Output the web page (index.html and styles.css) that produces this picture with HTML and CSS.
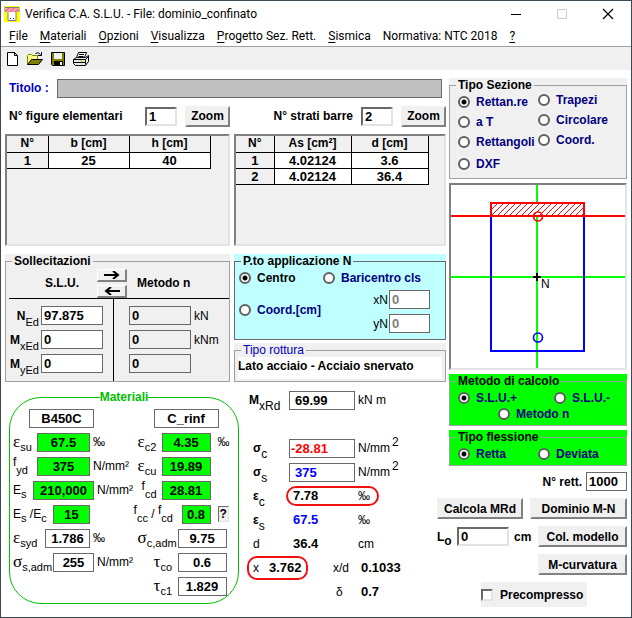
FILE: index.html
```html
<!DOCTYPE html>
<html lang="it">
<head>
    <meta charset="UTF-8">
    <meta name="viewport" content="width=device-width, initial-scale=1.0">
    <title>Verifica C.A. S.L.U. - File: dominio_confinato</title>
    <link rel="stylesheet" href="styles.css">
</head>
<body>
<div class="window">
    <header class="titlebar">
        <svg class="app-icon" width="16" height="16" viewBox="0 0 16 16">
            <rect width="16" height="16" fill="#ffff00"/>
            <path d="M1 1.500h14v4h-3v9h-8v-9H1z" fill="#fff" stroke="#807890"/>
            <path d="M2 2h12v4H2z" fill="#ff9aa8"/>
            <path d="M2 5l3-3M6 6l4-4M11 6l3-3" stroke="#d8607c"/>
            <path d="M6 12.500h1M9 12.500h1" stroke="#404060"/>
        </svg>
        <h1>Verifica C.A. S.L.U. - File: dominio_confinato</h1>
        <div class="win-buttons">
            <button type="button" aria-label="Riduci"><svg width="12" height="12" viewBox="0 0 12 12"><path d="M1 6.500h10" stroke="#000"/></svg></button>
            <button type="button" aria-label="Ingrandisci" disabled><svg width="12" height="12" viewBox="0 0 12 12"><path d="M1.500 1.500h9v9h-9z" fill="none" stroke="#ccc"/></svg></button>
            <button type="button" aria-label="Chiudi"><svg width="12" height="12" viewBox="0 0 12 12"><path d="M1 1l10 10M11 1L1 11" stroke="#000" stroke-width="1.200"/></svg></button>
        </div>
    </header>

    <nav class="menubar">
        <a href="#"><u>F</u>ile</a>
        <a href="#"><u>M</u>ateriali</a>
        <a href="#"><u>O</u>pzioni</a>
        <a href="#"><u>V</u>isualizza</a>
        <a href="#"><u>P</u>rogetto Sez. Rett.</a>
        <a href="#"><u>S</u>ismica</a>
        <a href="#">Normativa: NTC 2018</a>
        <a href="#"><u>?</u></a>
    </nav>

    <div class="toolbar">
        <button type="button" aria-label="Nuovo">
            <svg width="16" height="16" viewBox="0 0 16 16"><path d="M3.500 1.500h7l3 3v10h-10zM10.500 1.500v3h3" fill="#fff" stroke="#000"/></svg>
        </button>
        <button type="button" aria-label="Apri">
            <svg width="18" height="16" viewBox="0 0 18 16">
                <path d="M1.500 13.500v-9l1-1h3l1 1h5v4" fill="#ffff80" stroke="#808000"/>
                <path d="M1.500 13.500l4-5h11l-4 5z" fill="#808000" stroke="#000"/>
                <path d="M9.500 2.500q3-2 5 1M15.500 1v3.500H12" fill="none" stroke="#000"/>
            </svg>
        </button>
        <button type="button" aria-label="Salva">
            <svg width="16" height="16" viewBox="0 0 16 16">
                <path d="M1.500 1.500h13v13h-12l-1-1z" fill="#808000" stroke="#000"/>
                <path d="M4 2h8v6H4z" fill="#f0f0f0"/>
                <path d="M4 10h9v5H4z" fill="#000"/>
                <path d="M10 11h2v3h-2z" fill="#f0f0f0"/>
            </svg>
        </button>
        <button type="button" aria-label="Stampa">
            <svg width="18" height="16" viewBox="0 0 18 16">
                <path d="M4.500 6.500l2-5h8l-2 5" fill="#fff" stroke="#000"/>
                <path d="M7 3.500h5M6.500 5.500h5" stroke="#000"/>
                <path d="M1.500 8.500l3-2h9l3-2v6l-3 4h-10l-2-2z" fill="#e8e8e8" stroke="#000"/>
                <path d="M1.500 8.500h12v5M13.500 8.500l3-3M2 11.500h11" fill="none" stroke="#000"/>
                <path d="M8 10h3" stroke="#d0d000"/>
            </svg>
        </button>
    </div>

    <main class="content">
        <div class="left">
            <div class="title-row">
                <label for="titolo">Titolo :</label>
                <input type="text" id="titolo">
            </div>

            <div class="two-cols">
                <div class="count-row">
                    <label for="nfig">N° figure elementari</label>
                    <input type="text" class="sunken" id="nfig" value="1">
                    <button type="button" class="btn">Zoom</button>
                </div>
                <div class="count-row end">
                    <label for="nbarre">N° strati barre</label>
                    <input type="text" class="sunken" id="nbarre" value="2">
                    <button type="button" class="btn">Zoom</button>
                </div>
            </div>

            <div class="two-cols">
                <div class="grid-box">
                    <table class="figure">
                        <thead><tr><th>N°</th><th>b [cm]</th><th>h [cm]</th></tr></thead>
                        <tbody><tr><th>1</th><td>25</td><td>40</td></tr></tbody>
                    </table>
                </div>
                <div class="grid-box">
                    <table class="barre">
                        <thead><tr><th>N°</th><th>As [cm²]</th><th>d [cm]</th></tr></thead>
                        <tbody>
                            <tr><th>1</th><td>4.02124</td><td>3.6</td></tr>
                            <tr><th>2</th><td>4.02124</td><td>36.4</td></tr>
                        </tbody>
                    </table>
                </div>
            </div>

            <div class="two-cols">
                <div class="group">
                    <fieldset class="sollecitazioni">
                        <legend>Sollecitazioni</legend>
                        <div class="soll-head">
                            <span>S.L.U.</span>
                            <div class="arrows">
                                <button type="button" class="btn" aria-label="Copia a destra"><svg width="16" height="8" viewBox="0 0 16 8"><path d="M0 4h13M9 0l5 4-5 4" fill="none" stroke="#000" stroke-width="2"/></svg></button>
                                <button type="button" class="btn" aria-label="Copia a sinistra"><svg width="16" height="8" viewBox="0 0 16 8"><path d="M16 4H3M7 0L2 4l5 4" fill="none" stroke="#000" stroke-width="2"/></svg></button>
                            </div>
                            <span>Metodo n</span>
                        </div>
                        <div class="soll-body">
                            <div class="soll-slu">
                                <div><label for="ned"><b>N</b><sub>Ed</sub></label><input type="text" id="ned" value="97.875"></div>
                                <div><label for="mxed"><b>M</b><sub>xEd</sub></label><input type="text" id="mxed" value="0"></div>
                                <div><label for="myed"><b>M</b><sub>yEd</sub></label><input type="text" id="myed" value="0"></div>
                            </div>
                            <div class="soll-n">
                                <div><input type="text" id="nn" value="0" readonly><label for="nn">kN</label></div>
                                <div><input type="text" id="mxn" value="0" readonly><label for="mxn">kNm</label></div>
                                <div><input type="text" id="myn" value="0" aria-label="My metodo n" readonly></div>
                            </div>
                        </div>
                    </fieldset>
                </div>

                <div class="stack">
                    <div class="group cyan">
                        <fieldset class="punto">
                            <legend>P.to applicazione N</legend>
                            <div class="punto-row">
                                <label class="radio black"><input type="radio" name="punto" checked>Centro</label>
                                <label class="radio"><input type="radio" name="punto">Baricentro cls</label>
                            </div>
                            <div class="punto-row coord">
                                <label class="radio"><input type="radio" name="punto">Coord.[cm]</label>
                                <div class="coords">
                                    <div><label for="xn">xN</label><input type="text" id="xn" value="0"></div>
                                    <div><label for="yn">yN</label><input type="text" id="yn" value="0"></div>
                                </div>
                            </div>
                        </fieldset>
                    </div>
                    <div class="group">
                        <fieldset class="rottura">
                            <legend>Tipo rottura</legend>
                            <p>Lato acciaio - Acciaio snervato</p>
                        </fieldset>
                    </div>
                </div>
            </div>

            <div class="lower">
                <fieldset class="materiali">
                    <legend>Materiali</legend>
                    <div class="mat-cols">
                        <div class="mat-col">
                            <div class="mat-row name"><input type="text" class="w65" value="B450C" aria-label="Acciaio"></div>
                            <div class="mat-row"><label class="w24" for="esu"><i>ε</i><sub>su</sub></label><input type="text" class="w53 green" id="esu" value="67.5"><span class="pm">‰</span></div>
                            <div class="mat-row"><label class="w24" for="fyd"><sup>f</sup><sub>yd</sub></label><input type="text" class="w53 green" id="fyd" value="375"><span>N/mm²</span></div>
                            <div class="mat-row"><label class="w20" for="es">E<sub>s</sub></label><input type="text" class="w61 green" id="es" value="210,000"><span>N/mm²</span></div>
                            <div class="mat-row"><label class="w40" for="esec">E<sub>s</sub> /E<sub>c</sub></label><input type="text" class="w37 green" id="esec" value="15"></div>
                            <div class="mat-row"><label class="w32" for="esyd"><i>ε</i><sub>syd</sub></label><input type="text" class="w45" id="esyd" value="1.786"><span class="pm">‰</span></div>
                            <div class="mat-row"><label class="w40" for="ssadm"><i>σ</i><sub>s,adm</sub></label><input type="text" class="w41" id="ssadm" value="255"><span>N/mm²</span></div>
                        </div>
                        <div class="mat-col">
                            <div class="mat-row name"><input type="text" class="w65" value="C_rinf" aria-label="Calcestruzzo"></div>
                            <div class="mat-row"><label class="w24" for="ec2"><i>ε</i><sub>c2</sub></label><input type="text" class="w49 green" id="ec2" value="4.35"><span class="pm far">‰</span></div>
                            <div class="mat-row"><label class="w24" for="ecu"><i>ε</i><sub>cu</sub></label><input type="text" class="w49 green" id="ecu" value="19.89"></div>
                            <div class="mat-row"><label class="w24 shift" for="fcd"><sup>f</sup><sub>cd</sub></label><input type="text" class="w49 green" id="fcd" value="28.81"></div>
                            <div class="mat-row wide"><label class="w48" for="fcc"><sup>f</sup><sub>cc</sub> / <sup>f</sup><sub>cd</sub></label><input type="text" class="w29 green" id="fcc" value="0.8"><button type="button" class="help">?</button></div>
                            <div class="mat-row"><label class="w40" for="scadm"><i>σ</i><sub>c,adm</sub></label><input type="text" class="w49" id="scadm" value="9.75"></div>
                            <div class="mat-row"><label class="w40 tau" for="tco"><i>τ</i><sub>co</sub></label><input type="text" class="w49" id="tco" value="0.6"></div>
                            <div class="mat-row"><label class="w40 tau" for="tc1"><i>τ</i><sub>c1</sub></label><input type="text" class="w49" id="tc1" value="1.829"></div>
                        </div>
                    </div>
                </fieldset>

                <div class="results">
                    <div class="res-row first"><label for="mxrd"><b>M</b><sub>xRd</sub></label><input type="text" id="mxrd" value="69.99" readonly><span>kN m</span></div>
                    <div class="res-row"><label for="sc"><b>σ</b><sub>c</sub></label><input type="text" class="red" id="sc" value="-28.81" readonly><span>N/mm<sup>2</sup></span></div>
                    <div class="res-row"><label for="ss"><b>σ</b><sub>s</sub></label><input type="text" class="blue" id="ss" value="375" readonly><span>N/mm<sup>2</sup></span></div>
                    <div class="res-row"><label for="rec"><b>ε</b><sub>c</sub></label><div class="mark mark-eps"><output id="rec">7.78</output><span class="pm">‰</span></div></div>
                    <div class="res-row"><label for="res"><b>ε</b><sub>s</sub></label><output class="blue" id="res">67.5</output><span class="pm">‰</span></div>
                    <div class="res-row"><label for="rd">d</label><output id="rd">36.4</output><span>cm</span></div>
                    <div class="res-row">
                        <div class="mark mark-x"><label for="rx">x</label><output id="rx">3.762</output></div>
                        <label class="second" for="rxd">x/d</label><output id="rxd">0.1033</output>
                    </div>
                    <div class="res-row"><label class="second" for="rdelta">δ</label><output id="rdelta">0.7</output></div>
                </div>
            </div>
        </div>

        <div class="right">
            <div class="group">
                <fieldset class="sezione">
                    <legend>Tipo Sezione</legend>
                    <div class="sez-col">
                        <label class="radio"><input type="radio" name="sez" checked>Rettan.re</label>
                        <label class="radio"><input type="radio" name="sez">a T</label>
                        <label class="radio"><input type="radio" name="sez">Rettangoli</label>
                        <label class="radio dxf"><input type="radio" name="sez">DXF</label>
                    </div>
                    <div class="sez-col">
                        <label class="radio"><input type="radio" name="sez">Trapezi</label>
                        <label class="radio"><input type="radio" name="sez">Circolare</label>
                        <label class="radio"><input type="radio" name="sez">Coord.</label>
                    </div>
                </fieldset>
            </div>

            <div class="drawing">
                <svg viewBox="0 0 174 183">
                    <defs>
                        <clipPath id="compressa"><rect x="40" y="18" width="93" height="13"/></clipPath>
                    </defs>
                    <path d="M86 0v183M0 92h174" stroke="#0f0" stroke-width="2"/>
                    <path d="M40 31v135h93V31" fill="none" stroke="#00f" stroke-width="2"/>
                    <rect x="40" y="18" width="93" height="13" fill="#fff"/>
                    <path clip-path="url(#compressa)" d="M34 31l13-13M40 31l13-13M46 31l13-13M52 31l13-13M58 31l13-13M64 31l13-13M70 31l13-13M76 31l13-13M82 31l13-13M88 31l13-13M94 31l13-13M100 31l13-13M106 31l13-13M112 31l13-13M118 31l13-13M124 31l13-13M130 31l13-13" stroke="#f00"/>
                    <path d="M40 31V18h93v13M0 31h174" fill="none" stroke="#f00" stroke-width="2"/>
                    <circle cx="87" cy="31.500" r="4.500" fill="none" stroke="#f00" stroke-width="1.600"/>
                    <circle cx="87" cy="152.500" r="4.500" fill="none" stroke="#00f" stroke-width="1.600"/>
                    <path d="M86 88v8M82 92h8" stroke="#000" stroke-width="2"/>
                    <text x="90" y="103">N</text>
                </svg>
            </div>

            <div class="group lime">
                <fieldset class="metodo">
                    <legend>Metodo di calcolo</legend>
                    <div class="spread">
                        <label class="radio"><input type="radio" name="metodo" checked>S.L.U.+</label>
                        <label class="radio"><input type="radio" name="metodo">S.L.U.-</label>
                    </div>
                    <div class="centre">
                        <label class="radio"><input type="radio" name="metodo">Metodo n</label>
                    </div>
                </fieldset>
            </div>

            <div class="group lime">
                <fieldset class="flessione">
                    <legend>Tipo flessione</legend>
                    <div class="spread">
                        <label class="radio"><input type="radio" name="fless" checked>Retta</label>
                        <label class="radio"><input type="radio" name="fless">Deviata</label>
                    </div>
                </fieldset>
            </div>

            <div class="actions">
                <div class="act-row">
                    <label for="nrett">N° rett.</label>
                    <input type="text" id="nrett" value="1000">
                </div>
                <div class="act-row between">
                    <button type="button" class="btn calcola">Calcola MRd</button>
                    <button type="button" class="btn dominio">Dominio M-N</button>
                </div>
                <div class="act-row between">
                    <div class="lo">
                        <label for="lo">L<sub>o</sub></label>
                        <input type="text" class="sunken" id="lo" value="0">
                        <span>cm</span>
                    </div>
                    <button type="button" class="btn model">Col. modello</button>
                </div>
                <div class="act-row">
                    <button type="button" class="btn model">M-curvatura</button>
                </div>
                <label class="precompresso"><input type="checkbox">Precompresso</label>
            </div>
        </div>
    </main>
</div>
</body>
</html>
```

FILE: styles.css
```css
* {
    margin: 0;
    padding: 0;
    box-sizing: border-box;
}

body {
    font-family: "Liberation Sans", Arial, sans-serif;
    font-size: 12px;
    line-height: 14px;
    color: #000;
    background: #fff;
}

button, input {
    font-family: inherit;
    font-size: 12px;
    font-weight: bold;
    color: #000;
}

.window {
    min-height: 100vh;
    border: 1px solid #3c4a56;
    background: #fff;
}

/* title bar and menu */
.titlebar {
    display: flex;
    align-items: center;
    height: 25px;
    padding-left: 3px;
}

.titlebar h1 {
    margin-left: 5px;
    font-family: Roboto, "Open Sans", sans-serif;
    font-size: 12px;
    font-weight: normal;
}

.win-buttons {
    display: flex;
    margin-left: auto;
}

.win-buttons button {
    width: 46px;
    height: 24px;
    border: none;
    background: none;
}

.win-buttons svg {
    vertical-align: middle;
}

.menubar {
    display: flex;
    gap: 12px;
    height: 21px;
    padding-left: 8px;
    border-bottom: 1px solid #a0a0a0;
    font-family: Roboto, "Open Sans", sans-serif;
    font-size: 12px;
    line-height: 20px;
}

.menubar a {
    color: #000;
    text-decoration: none;
}

.menubar u {
    text-underline-offset: 2px;
}

.toolbar {
    display: flex;
    gap: 6px;
    align-items: center;
    height: 23px;
    padding-left: 3px;
    background: #f0f0f0;
}

.toolbar button {
    height: 16px;
    border: none;
    background: none;
}

.toolbar svg {
    display: block;
}

/* shared controls */
input[type="text"] {
    min-width: 0;
    height: 19px;
    padding: 0 2px;
    border: 1px solid #696969;
    background: #fff;
    font-size: 13px;
}

input.sunken {
    border: 2px solid;
    border-color: #696969 #e3e3e3 #e3e3e3 #696969;
}

.btn {
    height: 21px;
    border: 2px solid;
    border-color: #f0f0f0 #808080 #808080 #f0f0f0;
    background: #f0f0f0;
    white-space: nowrap;
}

.group {
    background: #f0f0f0;
}

.group.cyan {
    background: #c0ffff;
}

.group.lime {
    background: #00ff00;
}

fieldset {
    min-width: 0;
    border: 1px solid #a0a0a0;
}

legend {
    margin-left: 6px;
    padding: 0 2px;
    font-weight: bold;
    line-height: 14px;
}

.radio {
    display: flex;
    align-items: center;
    gap: 6px;
    height: 20px;
    font-weight: bold;
    color: #000080;
    white-space: nowrap;
}

.radio.black {
    color: #000;
}

.radio input {
    appearance: none;
    flex: none;
    width: 12px;
    height: 12px;
    border: 2px solid #606060;
    border-radius: 50%;
    background: #fff;
}

.radio input:checked {
    background: radial-gradient(circle, #000 2px, #fff 3px);
}

sub, sup {
    font-size: 12px;
    line-height: 0;
}

/* page layout */
.content {
    display: grid;
    grid-template-columns: 441fr 178fr;
    gap: 3px;
    padding: 8px 4px;
}

.left {
    display: flex;
    flex-direction: column;
    gap: 8px;
    min-width: 0;
}

.two-cols {
    display: grid;
    grid-template-columns: 225fr 212fr;
    gap: 4px;
}

.title-row {
    display: flex;
    align-items: center;
    height: 20px;
    padding: 0 4px;
}

.title-row label {
    width: 48px;
    font-weight: bold;
    color: #0000c0;
}

.title-row input[type="text"] {
    flex: 1;
    background: #c0c0c0;
}

.count-row {
    display: flex;
    align-items: center;
    gap: 8px;
    height: 20px;
    padding-left: 4px;
    font-weight: bold;
}

.count-row label {
    margin-right: auto;
}

.count-row.end label {
    margin: 0 0 0 auto;
}

.count-row input {
    width: 32px;
}

.count-row .btn {
    width: 45px;
}

.grid-box {
    height: 112px;
    border: 2px solid;
    border-color: #808080 #e3e3e3 #e3e3e3 #808080;
    background: #f0f0f0;
}

table {
    border-collapse: collapse;
    table-layout: fixed;
}

th, td {
    width: 81px;
    height: 16px;
    border: 1px solid #000;
    font-weight: bold;
    line-height: 15px;
    text-align: center;
}

thead th {
    border-top: none;
}

tr > :first-child {
    border-left: none;
}

tbody th, td {
    font-size: 13px;
}

td {
    background: #fff;
}

.figure tr > :first-child {
    width: 41px;
}

.barre th, .barre td {
    width: 77px;
}

.barre tr > :first-child {
    width: 38px;
}

/* sollecitazioni */
.sollecitazioni {
    height: 128px;
    padding-left: 3px;
}

.sollecitazioni legend {
    margin-left: 3px;
}

.soll-head {
    display: grid;
    grid-template-columns: 88px 30px 1fr;
    align-items: center;
    height: 31px;
    border-bottom: 1px solid #000;
    font-weight: bold;
}

.soll-head > :first-child {
    padding-left: 36px;
}

.soll-head > :last-child {
    padding-left: 10px;
}

.arrows {
    display: grid;
    gap: 3px;
}

.arrows .btn {
    height: 13px;
    border-width: 1px 2px 2px 1px;
    border-color: #fff #808080 #808080 #fff;
}

.arrows svg {
    display: block;
    margin: 0 auto;
}

.soll-body {
    display: grid;
    grid-template-columns: 105px 1fr;
}

.soll-slu, .soll-n {
    display: grid;
    gap: 5px;
    padding-top: 7px;
    padding-bottom: 8px;
}

.soll-slu {
    border-right: 1px solid #000;
}

.soll-body div div {
    display: flex;
    align-items: center;
}

.soll-slu label {
    width: 32px;
    padding-right: 2px;
    text-align: right;
    white-space: nowrap;
}

.soll-slu sub {
    font-size: 11px;
    vertical-align: -6px;
}

.soll-body input {
    width: 62px;
}

.soll-n {
    padding-left: 15px;
}

.soll-n input[type="text"] {
    background: #f0f0f0;
}

.soll-n label {
    margin-left: 3px;
}

/* punto di applicazione, tipo rottura */
.stack {
    display: flex;
    flex-direction: column;
    gap: 3px;
}

.punto {
    height: 86px;
    padding-left: 4px;
    border-color: #696969;
}

.punto legend {
    margin-left: 2px;
}

.punto-row {
    display: grid;
    grid-template-columns: 84px 1fr;
}

.punto-row.coord {
    grid-template-columns: 1fr 72px;
    margin-top: 2px;
}

.coord .radio {
    margin-top: 10px;
}

.coords {
    display: grid;
    gap: 5px;
    padding-right: 15px;
}

.coords div {
    display: flex;
    align-items: center;
    justify-content: flex-end;
    gap: 1px;
}

.coords input[type="text"] {
    flex: none;
    width: 41px;
    color: #808080;
}

.rottura {
    height: 39px;
    padding: 0 3px;
}

.rottura legend {
    margin-left: 3px;
    font-weight: normal;
    color: #0000c0;
}

.rottura p {
    height: 22px;
    font-weight: bold;
    line-height: 18px;
    background: #fff;
    white-space: nowrap;
}

/* materiali */
.lower {
    display: grid;
    grid-template-columns: 234fr 199fr;
    gap: 8px;
}

.materiali {
    height: 214px;
    margin-left: 4px;
    border-color: #00c000;
    border-radius: 32px;
}

.materiali legend {
    margin: 0 auto;
    padding: 0;
    color: #00c000;
}

.mat-cols {
    display: grid;
    grid-template-columns: 124fr 100fr;
    padding-top: 2px;
    padding-left: 3px;
}

.mat-row {
    display: flex;
    align-items: center;
    height: 24px;
    white-space: nowrap;
}

.mat-row.name {
    padding-left: 16px;
}

.mat-row.wide {
    margin-left: -4px;
}

.mat-row input {
    flex: none;
    text-align: center;
}

.mat-row input.green {
    background: #00ff00;
}

.mat-row label {
    flex: none;
}

.mat-row label i {
    font-family: "Liberation Serif", serif;
    font-size: 17px;
    font-style: normal;
    line-height: 14px;
}

.mat-row sub {
    font-size: 11px;
    vertical-align: -4px;
}

.mat-row sup {
    vertical-align: 4px;
}

.mat-row span {
    margin-left: 3px;
}

.mat-row .far {
    margin-left: 7px;
}

.mat-row .shift {
    padding-left: 4px;
}

.mat-row .tau {
    padding-left: 16px;
}

.w20 { width: 20px; }
.w24 { width: 24px; }
.w29 { width: 29px; }
.w32 { width: 32px; }
.w37 { width: 37px; }
.w40 { width: 40px; }
.w41 { width: 41px; }
.w45 { width: 45px; }
.w48 { width: 48px; }
.w49 { width: 49px; }
.w53 { width: 53px; }
.w61 { width: 61px; }
.w65 { width: 65px; }

.help {
    width: 11px;
    height: 16px;
    margin-left: 7px;
    border: 1px solid;
    border-color: #696969 #e3e3e3 #e3e3e3 #696969;
    background: #f0f0f0;
}

/* risultati */
.res-row {
    display: flex;
    align-items: center;
    height: 24px;
    white-space: nowrap;
}

.res-row.first {
    height: 20px;
    margin-bottom: 26px;
}

.res-row label {
    flex: none;
    width: 42px;
    padding-left: 6px;
}

.res-row.first label {
    padding-left: 2px;
}

.res-row sub {
    vertical-align: -6px;
}

.res-row sup {
    margin-left: 2px;
    vertical-align: 6px;
}

.res-row input[type="text"] {
    flex: none;
    width: 66px;
    margin-right: 3px;
    padding-left: 5px;
}

.res-row input.red[type="text"] {
    padding-left: 1px;
}

.res-row output {
    width: 65px;
    margin-left: 4px;
    font-size: 13px;
    font-weight: bold;
}

.res-row .red {
    color: #f00;
}

.res-row .blue {
    color: #00f;
}

.mark {
    display: flex;
    align-items: center;
    height: 20px;
    border: 2px solid #f01010;
    border-radius: 10px;
}

.mark-eps {
    width: 93px;
    margin-left: -3px;
    padding-left: 1px;
}

.mark-x {
    width: 61px;
    height: 24px;
}

.mark-x label {
    width: 16px;
    padding-left: 4px;
}

.res-row .second {
    width: 110px;
    padding-left: 89px;
}

.res-row .mark-x + .second {
    width: 49px;
    padding-left: 25px;
}

/* right column */
.right {
    display: flex;
    flex-direction: column;
    gap: 4px;
    min-width: 0;
}

.sezione {
    display: grid;
    grid-template-columns: 80px 1fr;
    height: 101px;
    padding-left: 8px;
}

.right legend {
    margin-left: -2px;
}

.sez-col:last-child {
    margin-top: -2px;
}

.radio.dxf {
    height: 24px;
}

.drawing {
    border: 2px solid;
    border-color: #808080 #e3e3e3 #e3e3e3 #808080;
}

.drawing svg {
    display: block;
    width: 100%;
}

.drawing text {
    font-size: 12px;
}

.metodo, .flessione {
    padding: 0 8px;
}

.metodo {
    height: 52px;
}

.flessione {
    height: 36px;
}

.spread {
    display: grid;
    grid-template-columns: 96px 1fr;
}

.flessione .spread {
    grid-template-columns: 80px 1fr;
}

.centre {
    margin-top: -4px;
    padding-left: 40px;
}

/* the buttons reach a little under the results column */
.actions {
    display: flex;
    flex-direction: column;
    gap: 7px;
    margin-top: 2px;
    margin-left: -12px;
    font-weight: bold;
}

.act-row {
    display: flex;
    align-items: center;
    justify-content: flex-end;
    gap: 4px;
    height: 21px;
}

.act-row:first-child {
    height: 19px;
}

.act-row.between {
    justify-content: space-between;
}

#nrett {
    width: 41px;
}

.calcola {
    width: 86px;
}

.dominio {
    width: 97px;
}

.model {
    width: 89px;
}

.lo {
    display: flex;
    align-items: center;
}

.lo label {
    width: 20px;
}

.lo sub {
    vertical-align: -4px;
}

.lo input {
    width: 52px;
}

.lo span {
    margin-left: 5px;
}

.precompresso {
    display: flex;
    align-items: center;
    gap: 7px;
    width: 106px;
    height: 25px;
    margin-left: 44px;
    background: #f0f0f0;
}

.precompresso input {
    appearance: none;
    flex: none;
    width: 12px;
    height: 12px;
    border: 2px solid;
    border-color: #696969 #e3e3e3 #e3e3e3 #696969;
    background: #fff;
}
```
